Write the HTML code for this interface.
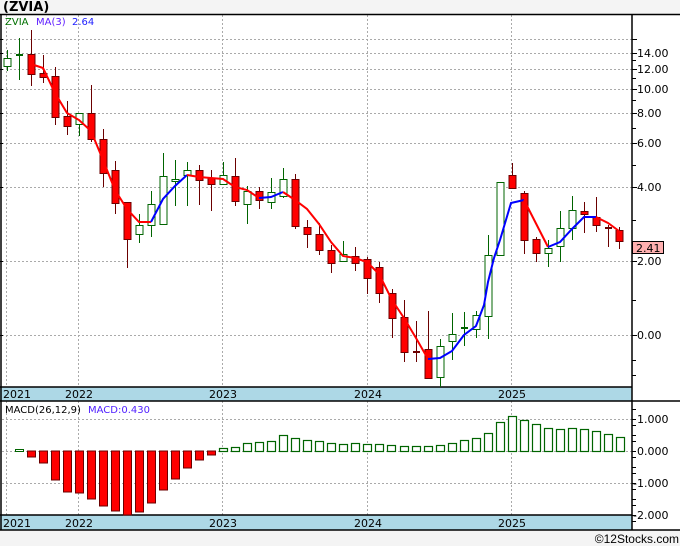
<!DOCTYPE html>
<html><head><meta charset="utf-8"><style>
html,body{margin:0;padding:0;background:#f4f4f4;}
svg{display:block;font-family:"DejaVu Sans","Liberation Sans",sans-serif;}
</style></head><body>
<svg id="s" width="680" height="546" xmlns="http://www.w3.org/2000/svg">
<rect x="0" y="0" width="680" height="546" fill="#f4f4f4"/>
<text x="3" y="11" font-size="13" font-weight="bold" fill="#000">(ZVIA)</text>
<rect x="0" y="14" width="680" height="516" fill="#fff"/>
<g id="grid" stroke="#aaa" stroke-width="1" stroke-dasharray="2,2"></g>
<rect x="0" y="387" width="632" height="14" fill="#add8e6"/>
<rect x="0" y="515" width="632" height="15" fill="#add8e6"/>
<g stroke="#000" stroke-width="1.5" fill="none">
<line x1="0" y1="14.5" x2="680" y2="14.5"/>
<line x1="0" y1="387" x2="632" y2="387"/>
<line x1="0" y1="401" x2="680" y2="401"/>
<line x1="0" y1="515" x2="632" y2="515"/>
<line x1="0" y1="530" x2="680" y2="530"/>
<line x1="1" y1="14" x2="1" y2="530"/>
<line x1="632" y1="14" x2="632" y2="530"/>
</g>
<g id="c"></g>
<g font-size="11" fill="#000">
<text x="3" y="398">2021</text><text x="65" y="398">2022</text><text x="209" y="398">2023</text><text x="354" y="398">2024</text><text x="498" y="398">2025</text>
<text x="3" y="527">2021</text><text x="65" y="527">2022</text><text x="209" y="527">2023</text><text x="354" y="527">2024</text><text x="498" y="527">2025</text>
</g>
<g font-size="10">
<text x="5" y="25" fill="#007000">ZVIA</text><text x="36" y="25" fill="#6020ff">MA(3)</text><text x="72" y="25" fill="#2020ff">2.64</text>
<text x="5" y="413" fill="#000">MACD(26,12,9)</text><text x="88" y="413" fill="#5020ff">MACD:0.430</text>
</g>
<g font-size="11" fill="#000">
<text x="637" y="57">14.00</text><text x="637" y="73">12.00</text><text x="637" y="93">10.00</text><text x="637" y="117">8.00</text><text x="637" y="147">6.00</text><text x="637" y="191">4.00</text><text x="637" y="265">2.00</text><text x="637" y="339">0.00</text>
<text x="637" y="423">1.000</text><text x="637" y="455">0.000</text><text x="633" y="487">-1.000</text><text x="633" y="519">-2.000</text>
</g>
<rect x="632.5" y="241.5" width="31" height="12" fill="#ffb0b0" stroke="#000"/>
<text x="636" y="252" font-size="11" fill="#000">2.41</text>
<text x="679" y="543" font-size="12" text-anchor="end" fill="#000" font-family="Liberation Sans, sans-serif">©12Stocks.com</text>
</svg>
<script>
var NS="http://www.w3.org/2000/svg",c=document.getElementById('c'),g=document.getElementById('grid');
function el(p,t,a){var e=document.createElementNS(NS,t);for(var k in a)e.setAttribute(k,a[k]);p.appendChild(e);return e;}
[39,53,69,89,113,143,187,261,335].forEach(function(y){el(g,'line',{x1:2,y1:y+.5,x2:632,y2:y+.5});el(c,'line',{x1:632,y1:y+.5,x2:637,y2:y+.5,stroke:'#000'});el(c,'line',{x1:0,y1:y+.5,x2:3,y2:y+.5,stroke:'#000'});});
[419,451,483].forEach(function(y){el(g,'line',{x1:2,y1:y+.5,x2:632,y2:y+.5});});
[419,451,483,515,435,467,499,409,425,441,457,473,489,505,521].forEach(function(y){el(c,'line',{x1:632,y1:y+.5,x2:636,y2:y+.5,stroke:'#000'});});
[60,78,100,128,165,220,300,360,375].forEach(function(y){el(c,'line',{x1:632,y1:y+.5,x2:636,y2:y+.5,stroke:'#000'});});
[6.5,78.5,222.5,367.5,511.5].forEach(function(x){el(g,'line',{x1:x,y1:15,x2:x,y2:387});el(g,'line',{x1:x,y1:401,x2:x,y2:515});});
var d=[[7,58,66,50,71,1],[19,55,55,38,80,1],[31,54,74,30,86,0],[43,73,77,55,83,0],[55,76,117,67,125,0],[67,116,126,101,135,0],[79,113,124,113,136,1],[91,113,139,85,142,0],[103,139,173,129,187,0],[115,170,203,161,214,0],[127,202,239,202,268,0],[139,225,234,214,243,1],[151,204,225,191,237,1],[163,176,224,153,206,1],[175,179,181,160,206,1],[187,170,175,162,206,1],[199,170,180,165,205,0],[211,178,184,170,211,0],[223,175,184,162,184,1],[235,176,201,158,206,0],[247,191,204,186,224,1],[259,191,200,187,209,0],[271,192,202,178,209,1],[283,179,196,168,198,1],[295,179,226,174,229,0],[307,227,234,220,248,0],[319,234,250,223,255,0],[331,250,263,245,273,0],[343,254,261,241,262,1],[355,256,263,247,271,0],[367,259,278,257,294,0],[379,267,293,262,303,0],[392,293,318,289,338,0],[404,317,352,300,362,0],[416,352,352,321,362,0],[428,349,378,311,378,0],[440,346,377,339,387,1],[452,334,341,313,360,1],[464,328,328,312,346,1],[476,315,329,311,338,1],[488,255,316,235,339,1],[500,182,255,182,255,1],[512,175,188,163,188,0],[524,193,240,191,254,0],[536,239,253,237,262,0],[548,248,253,240,267,1],[560,228,246,211,262,1],[572,210,228,196,240,1],[584,211,214,202,233,0],[596,217,225,197,232,0],[608,228,228,225,247,0],[619,230,241,227,249,0]];
d.forEach(function(a){var col=a[5]?'#006400':'#6b0000';
el(c,'line',{x1:a[0]+.5,y1:a[3],x2:a[0]+.5,y2:a[4],stroke:col,'stroke-width':1});
if(a[2]-a[1]<2){el(c,'rect',{x:a[0]-3,y:a[1]-1,width:7,height:2,fill:col});}
else el(c,'rect',{x:a[0]-3,y:a[1]+.5,width:7,height:a[2]-a[1],fill:a[5]?'#fff':'#f00',stroke:col,'stroke-width':1});});
function pl(pts,col){el(c,'polyline',{points:pts,fill:'none',stroke:col,'stroke-width':2});}
pl("31,64 43,68 55,93 67,113 79,120 91,131 103,160 115,190 127,209 139,222 151,222","#f00");
pl("151,222 163,199 175,186 187,175","#00f");
pl("187,175 199,177 211,178 223,179 235,187 247,190 259,198","#f00");
pl("259,198 271,197 283,192","#00f");
pl("283,192 295,200 307,209 319,224 331,242 343,256 355,258 367,262 379,274 392,300 404,318 416,338 428,359","#f00");
pl("428,359 440,358 452,351 464,335 476,326 484,305 488,282 494,258 500,240 511,203 524,200","#00f");
pl("524,200 548,247","#f00");
pl("548,247 560,242 572,229 584,217 596,217","#00f");
pl("596,217 608,223 619,231","#f00");
var red=[457,463,480,492,493,499,506,511,515,512,503,490,479,468,460,455];
red.forEach(function(y,i){var x=31+i*12;el(c,'rect',{x:x-3.5,y:451,width:8,height:y-451,fill:'#f00',stroke:'#6b0000','stroke-width':1});});
el(c,'rect',{x:15.5,y:449.5,width:8,height:2,fill:'#fff',stroke:'#006400'});
var gr=[448,447,443,442,441,435,438,440,441,443,444,443,444,444,445,446,446,446,445,443,440,438,433,422,416,420,424,428,429,428,429,431,434,437];
gr.forEach(function(y,i){var x=223+i*12;if(x>=343)x=343+(i-10)*12+(i>14?1:0);el(c,'rect',{x:x-3.5,y:y+.5,width:8,height:451-y,fill:'#fff',stroke:'#006400','stroke-width':1.2});});
</script>
</body></html>
